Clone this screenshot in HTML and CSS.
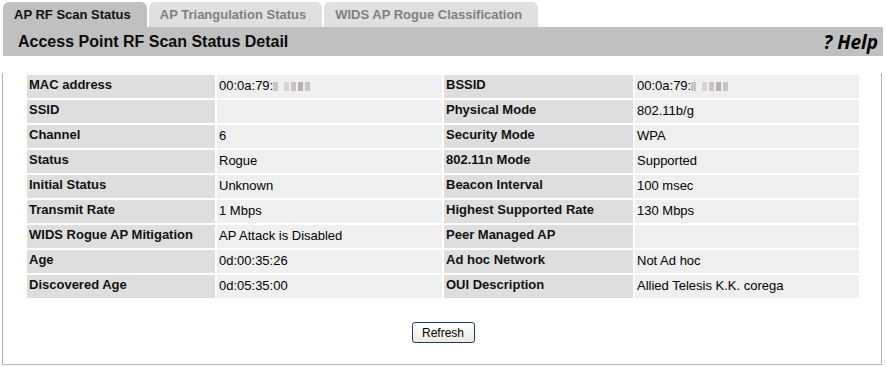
FILE: index.html
```html
<!DOCTYPE html>
<html>
<head>
  <meta charset="utf-8">
  <title>Access Point RF Scan Status Detail</title>
  <link rel="stylesheet" href="styles.css">
</head>
<body>
  <div class="page">
    <div class="tabs">
      <a class="tab active">AP RF Scan Status</a>
      <a class="tab">AP Triangulation Status</a>
      <a class="tab">WIDS AP Rogue Classification</a>
    </div>

    <div class="header">
      <h1 class="title">Access Point RF Scan Status Detail</h1>
      <a class="help">? Help</a>
    </div>

    <div class="panel">
      <table class="detail">
        <tr>
          <th>MAC address</th>
          <td>00:0a:79:<span class="blur"><i></i><i></i><i></i><i></i><i></i></span></td>
          <th>BSSID</th>
          <td>00:0a:79:<span class="blur"><i></i><i></i><i></i><i></i><i></i></span></td>
        </tr>
        <tr>
          <th>SSID</th>
          <td></td>
          <th>Physical Mode</th>
          <td>802.11b/g</td>
        </tr>
        <tr>
          <th>Channel</th>
          <td>6</td>
          <th>Security Mode</th>
          <td>WPA</td>
        </tr>
        <tr>
          <th>Status</th>
          <td>Rogue</td>
          <th>802.11n Mode</th>
          <td>Supported</td>
        </tr>
        <tr>
          <th>Initial Status</th>
          <td>Unknown</td>
          <th>Beacon Interval</th>
          <td>100 msec</td>
        </tr>
        <tr>
          <th>Transmit Rate</th>
          <td>1 Mbps</td>
          <th>Highest Supported Rate</th>
          <td>130 Mbps</td>
        </tr>
        <tr>
          <th>WIDS Rogue AP Mitigation</th>
          <td>AP Attack is Disabled</td>
          <th>Peer Managed AP</th>
          <td></td>
        </tr>
        <tr>
          <th>Age</th>
          <td>0d:00:35:26</td>
          <th>Ad hoc Network</th>
          <td>Not Ad hoc</td>
        </tr>
        <tr>
          <th>Discovered Age</th>
          <td>0d:05:35:00</td>
          <th>OUI Description</th>
          <td>Allied Telesis K.K. corega</td>
        </tr>
      </table>

      <div class="actions">
        <button class="button">Refresh</button>
      </div>
    </div>
  </div>
</body>
</html>
```

FILE: styles.css
```css
* {
  box-sizing: border-box;
}
body {
  margin: 0;
  font-family: "Liberation Sans", Arial, sans-serif;
  background: #fff;
  color: #000;
}
.page {
  padding: 2px 2px 0 3px;
  width: 886px;
}
.tabs {
  display: flex;
  gap: 2px;
  height: 25px;
}
.tab {
  display: block;
  height: 25px;
  padding: 5px 16px 0 11px;
  font-size: 13px;
  font-weight: bold;
  color: #7f7f7f;
  background: #e0e0e0;
  border-radius: 6px 6px 0 0;
  cursor: pointer;
}
.tab.active {
  color: #111;
  background: #c0c0c0;
}
.header {
  display: flex;
  align-items: center;
  justify-content: space-between;
  height: 29px;
  width: 880px;
  background: #c0c0c0;
  padding: 0 5px 0 15px;
}
.title {
  margin: 0;
  font-size: 16px;
  font-weight: bold;
  color: #0a0a0a;
}
.help {
  font-family: "Open Sans", "DejaVu Sans", sans-serif;
  font-size: 19px;
  font-weight: bold;
  font-style: italic;
  color: #000;
  cursor: pointer;
}
.panel {
  width: 880px;
  margin-left: -1px;
  padding-bottom: 21px;
  border: 1px solid #b4b4b4;
  border-top: none;
}
.detail {
  border-collapse: separate;
  border-spacing: 2px;
  margin: 17px 0 0 22px;
  width: 836px;
  table-layout: fixed;
  font-size: 13px;
}
.detail th, .detail td {
  height: 23px;
  padding: 0 2px;
  text-align: left;
  vertical-align: top;
  white-space: nowrap;
}
.detail th {
  background: #dedede;
  color: #111;
  padding-top: 2px;
}
.detail td {
  background: #efefef;
  padding-top: 3px;
}
.detail th:nth-child(1) {
  width: 188px;
}
.detail td:nth-child(2) {
  width: 225px;
}
.detail th:nth-child(3) {
  width: 189px;
}
.blur {
  display: inline-block;
  vertical-align: -1px;
}
.blur i {
  display: inline-block;
  width: 5px;
  height: 9px;
  margin-right: 2px;
  background: #c9c3c7;
}
.blur i:nth-child(2) {
  margin-left: 4px;
  background: #d8d4d6;
}
.blur i:nth-child(4) {
  background: #b8aeb4;
}
.actions {
  display: flex;
  justify-content: center;
  margin-top: 22px;
}
.button {
  display: block;
  width: 63px;
  height: 21px;
  padding: 0;
  font-family: "Liberation Sans", Arial, sans-serif;
  font-size: 12px;
  color: #000;
  background: linear-gradient(#ffffff, #ece9e0);
  border: 1px solid #1c3f6a;
  border-radius: 3px;
  margin-left: 2px;
}
```
